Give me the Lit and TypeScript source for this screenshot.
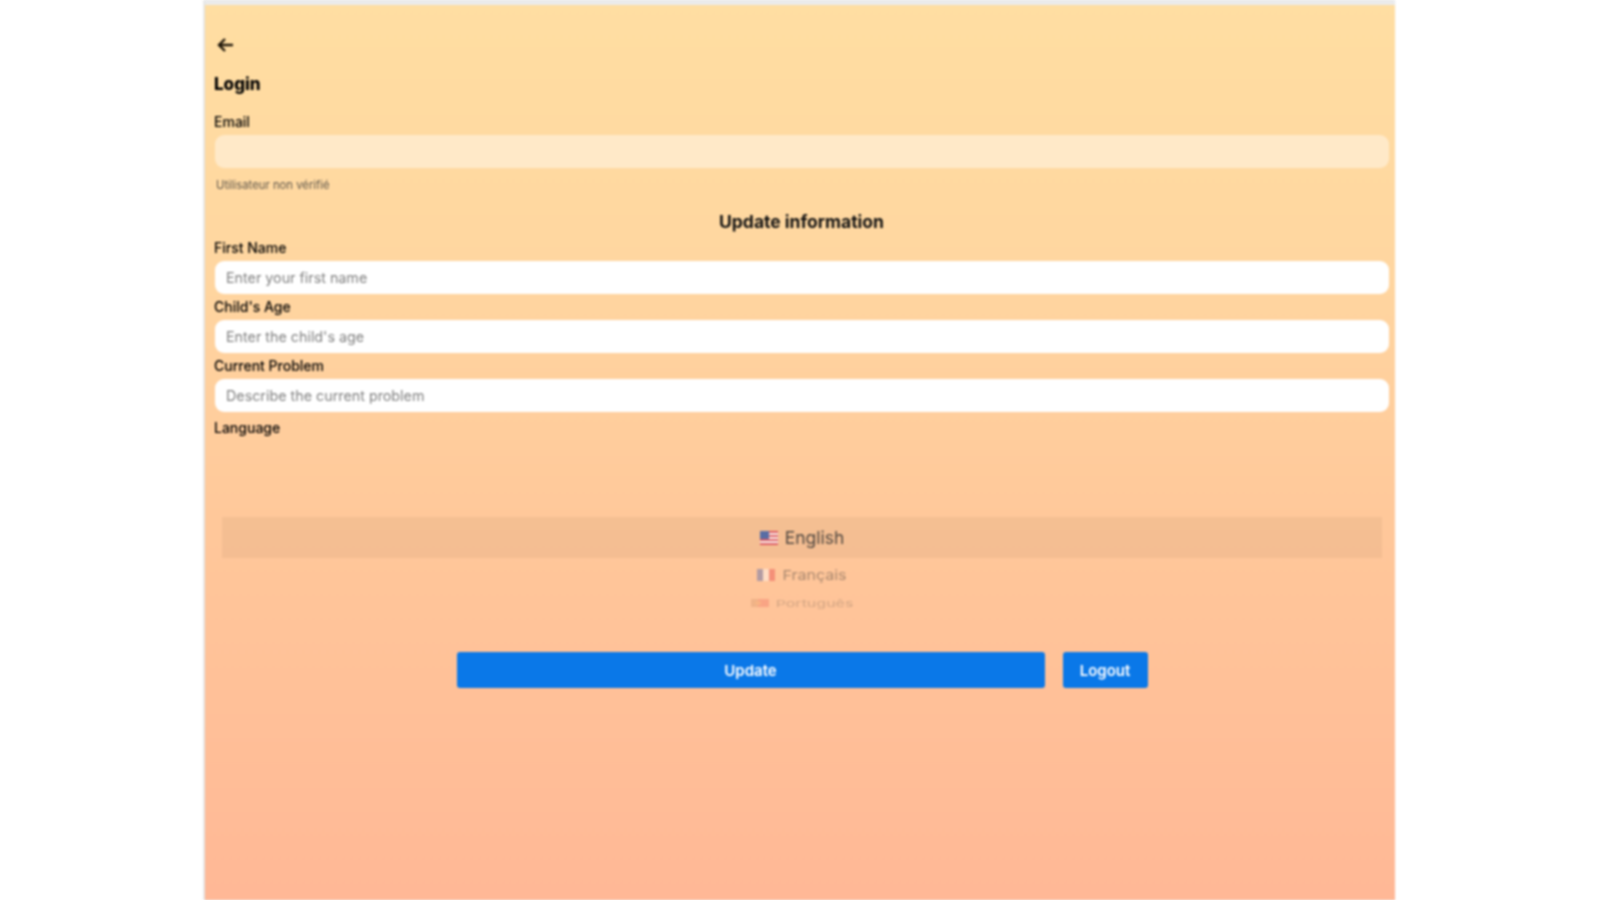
import { LitElement, html, css, svg } from "lit";
import { customElement } from "lit/decorators.js";

const us = svg`<svg class="flag" viewBox="0 0 18 14" width="18" height="14"><rect width="18" height="14" fill="#fff"/><g fill="#d8485a"><rect width="18" height="2"/><rect y="4" width="18" height="2"/><rect y="8" width="18" height="2"/><rect y="12" width="18" height="2"/></g><rect width="9" height="8" fill="#3f5fa8"/></svg>`;
const fr = svg`<svg class="flag" viewBox="0 0 18 14" width="18" height="14"><rect width="6" height="14" fill="#4a62b0"/><rect x="6" width="6" height="14" fill="#fff"/><rect x="12" width="6" height="14" fill="#e5484d"/></svg>`;
const pt = svg`<svg class="flag" viewBox="0 0 18 14" width="18" height="14"><rect width="7" height="14" fill="#b8764a"/><rect x="7" width="11" height="14" fill="#e5383b"/><circle cx="7" cy="7" r="3" fill="#e8863a"/></svg>`;

@customElement("app-root")
export class AppRoot extends LitElement {
  static styles = css`
    :host { display: block; background: #fff; height: 900px; overflow: hidden; font-family: Inter, "Liberation Sans", sans-serif; color: #1a1a1a; }
    .stage { display: flex; justify-content: center; height: 900px; }
    .panel { width: 1190px; height: 900px; margin-left: 1px; display: flex; flex-direction: column; filter: blur(1.1px); box-shadow: -1px 0 2px rgba(120,120,120,.35); }
    .topbar { height: 5px; flex: none; background: #ebebeb; }
    .body { flex: 1; display: flex; flex-direction: column; padding: 30px 6px 0 9px; background: linear-gradient(180deg, #ffdea2 0%, #ffd6a0 30%, #ffc79a 60%, #ffb896 100%); }
    .back { width: 24px; height: 20px; display: flex; align-items: center; padding-left: 2px; }
    h1 { margin: 18px 0 0; font-size: 17px; line-height: 22px; font-weight: 800; color: #000; }
    label { display: block; height: 17px; font-size: 14px; line-height: 17px; font-weight: 500; color: #000; margin-bottom: 5px; }
    .email-label { margin-top: 18px; }
    input { display: block; box-sizing: border-box; width: calc(100% - 1px); margin-left: 1px; height: 33px; padding: 0 11px; border: none; outline: none; border-radius: 9px; background: #fff; font: 400 14.3px Inter, "Liberation Sans", sans-serif; color: #222; }
    input::placeholder { color: #808080; opacity: 1; }
    .disabled { background: rgba(255,255,255,.42); }
    .hint { margin: 10px 0 0 2px; font-size: 11.3px; line-height: 14px; color: #5f574c; }
    h2 { margin: 20px 0 0; text-align: center; font-size: 17.5px; line-height: 20px; font-weight: 700; color: #111; }
    .first { margin-top: 7px; }
    .next { margin-top: 4px; }
    .lang { margin-top: 7px; margin-bottom: 0; }
    .picker { display: flex; flex-direction: column; align-items: stretch; margin: 81px 7px 0 8px; }
    .opt { display: flex; align-items: center; justify-content: center; gap: 7px; color: #333; font-size: 17.5px; }
    .sel { height: 41px; background: rgba(205,160,120,.22); }
    .sel span { opacity: .85; }
    .sel .flag { opacity: .85; }
    .fr { height: 20px; margin-top: 7px; font-size: 16px; opacity: .42; transform: scaleY(.86); }
    .pt { height: 14px; margin-top: 11px; font-size: 16px; opacity: .22; transform: scaleY(.6); }
    .actions { display: flex; justify-content: center; gap: 18px; margin-top: 42px; padding-left: 1px; }
    button { height: 36px; border: none; border-radius: 3px; background: #0a78e8; color: #fff; font: 600 15px Inter, "Liberation Sans", sans-serif; padding: 0; }
    .update { width: 588px; }
    .logout { width: 85px; }
  `;

  render() {
    return html`
      <div class="stage">
        <div class="panel">
          <div class="topbar"></div>
          <div class="body">
            <div class="back">
              <svg width="18" height="16" viewBox="0 0 18 16" fill="none" stroke="#1c1408" stroke-width="2.4"><path d="M17 8H3"/><path d="M9 2 3 8l6 6"/></svg>
            </div>
            <h1>Login</h1>
            <label class="email-label">Email</label>
            <input class="disabled" disabled />
            <div class="hint">Utilisateur non vérifié</div>
            <h2>Update information</h2>
            <label class="first">First Name</label>
            <input placeholder="Enter your first name" />
            <label class="next">Child's Age</label>
            <input placeholder="Enter the child's age" />
            <label class="next">Current Problem</label>
            <input placeholder="Describe the current problem" />
            <label class="lang">Language</label>
            <div class="picker">
              <div class="opt sel">${us}<span>English</span></div>
              <div class="opt fr">${fr}<span>Français</span></div>
              <div class="opt pt">${pt}<span>Português</span></div>
            </div>
            <div class="actions">
              <button class="update">Update</button>
              <button class="logout">Logout</button>
            </div>
          </div>
        </div>
      </div>
    `;
  }
}
